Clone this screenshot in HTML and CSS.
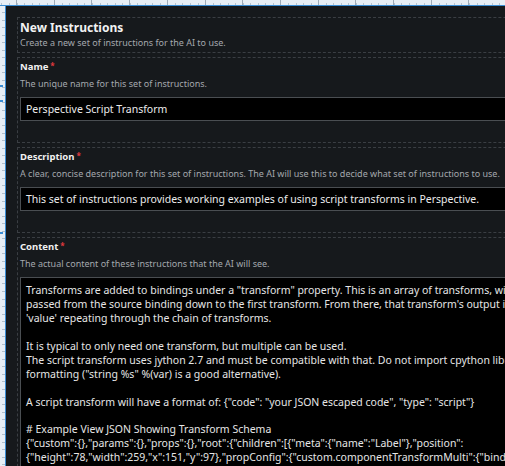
FILE: index.html
```html
<!DOCTYPE html>
<html lang="en">
<head>
<meta charset="utf-8">
<title>New Instructions</title>
<link rel="stylesheet" href="styles.css">
</head>
<body>
<div class="ruler-top"></div>
<div class="body-row">
  <div class="ruler-left">
    <span class="mark mark-a"></span>
    <span class="mark mark-b"></span>
    <span class="mark mark-c"></span>
  </div>
  <main class="panel">
    <section class="box header">
      <h1 class="title">New Instructions</h1>
      <p class="hint">Create a new set of instructions for the AI to use.</p>
    </section>
    <section class="box field">
      <div class="label">Name<span class="req">*</span></div>
      <p class="hint">The unique name for this set of instructions.</p>
      <div class="input">Perspective Script Transform</div>
    </section>
    <section class="box field">
      <div class="label">Description<span class="req">*</span></div>
      <p class="hint">A clear, concise description for this set of instructions. The AI will use this to decide what set of instructions to use.</p>
      <div class="input">This set of instructions provides working examples of using script transforms in Perspective.</div>
    </section>
    <section class="box field content">
      <div class="label">Content<span class="req">*</span></div>
      <p class="hint">The actual content of these instructions that the AI will see.</p>
      <div class="textarea">Transforms are added to bindings under a "transform" property. This is an array of transforms, with the value
passed from the source binding down to the first transform. From there, that transform's output is passed as the
'value' repeating through the chain of transforms.

It is typical to only need one transform, but multiple can be used.
The script transform uses jython 2.7 and must be compatible with that. Do not import cpython libraries. For string
formatting ("string %s" %(var) is a good alternative).

A script transform will have a format of: {"code": "your JSON escaped code", "type": "script"}

# Example View JSON Showing Transform Schema
{"custom":{},"params":{},"props":{},"root":{"children":[{"meta":{"name":"Label"},"position":
{"height":78,"width":259,"x":151,"y":97},"propConfig":{"custom.componentTransformMulti":{"binding":{"config":
{"path":"view.params.value"},"transforms":[{"code":"\treturn value","type":"script"}]}}}</div>
    </section>
  </main>
</div>
</body>
</html>
```
FILE: styles.css
```css
html, body {
  margin: 0;
  padding: 0;
}

body {
  width: 505px;
  height: 466px;
  overflow: hidden;
  background: #16191c;
  font-family: "Noto Sans", "Open Sans", sans-serif;
  color: #e8e8e8;
}

.ruler-top {
  height: 5px;
  border-bottom: 1px solid #3b8dd4;
  background-color: #e7eef5;
  background-image:
    repeating-linear-gradient(to right, transparent 0 16px, #9eabb8 16px 17px, transparent 17px 37.7px),
    repeating-linear-gradient(to right, transparent 0 1.5px, #b9c4ce 1.5px 2.5px, transparent 2.5px 7.54px);
  background-size: 100% 100%, 100% 2px;
  background-position: 0 0, 0 3px;
  background-repeat: no-repeat;
}

.body-row {
  display: flex;
  align-items: flex-start;
}

.ruler-left {
  position: relative;
  flex: 0 0 5px;
  height: 460px;
  border-right: 1px solid #3b8dd4;
  background-color: #e7eef5;
  background-image:
    repeating-linear-gradient(to bottom, transparent 0 6px, #b3bfca 6px 7px, transparent 7px 7.54px);
  background-size: 3px 100%;
  background-position: 2px 0;
  background-repeat: no-repeat;
}

.mark {
  position: absolute;
  left: 0;
  width: 3px;
  height: 2px;
  background: #3b8dd4;
}

.mark-a { top: 79px; }
.mark-b { top: 94px; }
.mark-c { top: 226px; }

.panel {
  flex: 0 0 auto;
  width: 700px;
  padding: 11px 0 0 11px;
  display: flex;
  flex-direction: column;
  gap: 4px;
}

.box {
  box-sizing: border-box;
  border: 1px dashed #3a3e43;
  padding: 2px 0 0 2px;
}

.header {
  height: 36px;
}

.title {
  margin: 0;
  font-size: 12px;
  line-height: 16px;
  font-weight: 700;
  color: #f2f2f2;
}

.hint {
  margin: 0;
  font-size: 9px;
  line-height: 12px;
  color: #a4a8ad;
  white-space: nowrap;
}

.header .hint {
  line-height: 13px;
}

.field {
  height: 86px;
}

.label {
  font-size: 9.5px;
  line-height: 13px;
  font-weight: 700;
  color: #f0f0f0;
  margin-bottom: 5px;
}

.req {
  color: #e0393f;
  font-size: 8px;
  margin-left: 2px;
  position: relative;
  top: -1px;
}

.input {
  margin-top: 7px;
  height: 22px;
  line-height: 22px;
  border: 1px solid #4a4e52;
  background: #000;
  padding: 0 5px;
  font-size: 10.5px;
  color: #ececec;
  white-space: nowrap;
}

.content {
  height: auto;
}

.textarea {
  margin-top: 7px;
  border: 1px solid #4a4e52;
  background: #000;
  padding: 6px 5px;
  font-size: 10.5px;
  line-height: 13.94px;
  color: #e6e6e6;
  white-space: pre;
}
```
